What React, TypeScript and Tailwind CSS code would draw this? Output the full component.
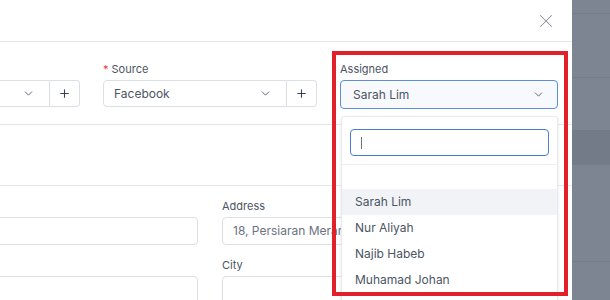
import { ChevronDown, Plus, X } from 'lucide-react';

const ASSIGNEES = ['Sarah Lim', 'Nur Aliyah', 'Najib Habeb', 'Muhamad Johan'];

function FieldLabel({ text, required }: { text?: string; required?: boolean }) {
  return (
    <div className="mb-[4px] h-[14px] text-[11px] leading-[14px] text-[#4b5563]">
      {required && <span className="mr-[3px] text-[#e0443e]">*</span>}
      {text}
    </div>
  );
}

// select + "add" button group
function SelectAdd({ value }: { value: string }) {
  return (
    <div className="flex h-[27px]">
      <div className="flex flex-1 items-center justify-between rounded-l-[4px] border border-[#dcdfe4] bg-white pl-[10px] pr-[14px] text-[12px] text-[#4b5563]">
        <span>{value}</span>
        <ChevronDown size={13} strokeWidth={1.6} className="text-[#4b5563]" />
      </div>
      <div className="flex w-[30px] items-center justify-center rounded-r-[4px] border border-l-0 border-[#dcdfe4] bg-white text-[#374151]">
        <Plus size={13} strokeWidth={2} />
      </div>
    </div>
  );
}

function TextInput({ value }: { value?: string }) {
  return (
    <div className="flex h-[28px] items-center overflow-hidden whitespace-nowrap rounded-[4px] border border-[#dcdfe4] bg-white px-[10px] text-[12px] text-[#6b7280]">
      {value}
    </div>
  );
}

export default function App() {
  return (
    <div className="flex h-[300px] w-[610px] overflow-hidden bg-white font-['Inter',sans-serif]">
      {/* Modal */}
      <div className="relative w-[572px] shrink-0 bg-white">
        <div className="flex h-[42px] items-center justify-end border-b border-[#e5e7eb] pr-[15px]">
          <X size={22} strokeWidth={1.1} className="text-[#8b9099]" />
        </div>

        <div className="h-[83px] border-b border-[#e5e7eb] pt-[20px]">
          <div className="ml-[-134px] grid grid-cols-[214px_214px_218px] gap-x-[23px]">
            <div>
              <FieldLabel />
              <SelectAdd value="" />
            </div>
            <div>
              <FieldLabel text="Source" required />
              <SelectAdd value="Facebook" />
            </div>
            <div>
              <FieldLabel text="Assigned" />
              <div className="flex h-[29px] items-center justify-between rounded-[4px] border-[1.5px] border-[#5b8fd8] bg-[#f7f9fc] pl-[12px] pr-[12px] text-[12px] text-[#4b5563]">
                <span>Sarah Lim</span>
                <ChevronDown size={13} strokeWidth={1.6} className="text-[#4b5563]" />
              </div>
            </div>
          </div>
        </div>

        <div className="h-[61px] border-b border-[#e5e7eb]" />

        <div className="pt-[13px]">
          <div className="ml-[-100px] grid grid-cols-[298px_300px] gap-x-[24px] gap-y-[13px]">
            <div>
              <FieldLabel />
              <TextInput />
            </div>
            <div>
              <FieldLabel text="Address" />
              <TextInput value="18, Persiaran Meranti" />
            </div>
            <div>
              <FieldLabel />
              <TextInput />
            </div>
            <div>
              <FieldLabel text="City" />
              <TextInput />
            </div>
          </div>
        </div>

        {/* open dropdown */}
        <div className="absolute left-[341px] top-[116px] h-[190px] w-[217px] rounded-[3px] border border-[#e8eaed] bg-white shadow-sm">
          <div className="border-b border-[#eceef1] px-[8px] pb-[8px] pt-[12px]">
            <div className="flex h-[27px] items-center rounded-[4px] border-[1.5px] border-[#4a7fd0] pl-[10px]">
              <div className="h-[12px] w-px bg-[#6b7280]" />
            </div>
          </div>
          <div className="pt-[24px]">
            {ASSIGNEES.map((name, i) => (
              <div
                key={name}
                className={`flex h-[26px] items-center pl-[13px] text-[12px] text-[#4b5563] ${
                  i === 0 ? 'bg-[#f1f3f6]' : ''
                }`}
              >
                {name}
              </div>
            ))}
          </div>
        </div>

        {/* highlight box */}
        <div className="pointer-events-none absolute left-[332px] top-[51px] h-[245px] w-[236px] border-4 border-[#e2202a]" />
      </div>

      {/* backdrop */}
      <div className="flex flex-1 flex-col bg-[#7d8593]">
        <div className="h-[14px] border-b border-[#747c8a]" />
        <div className="h-[64px] border-b border-[#747c8a]" />
        <div className="h-[52px]" />
        <div className="h-[35px] bg-[#737b89]" />
        <div className="h-[97px] border-b border-[#747c8a]" />
        <div className="flex-1" />
      </div>
    </div>
  );
}
